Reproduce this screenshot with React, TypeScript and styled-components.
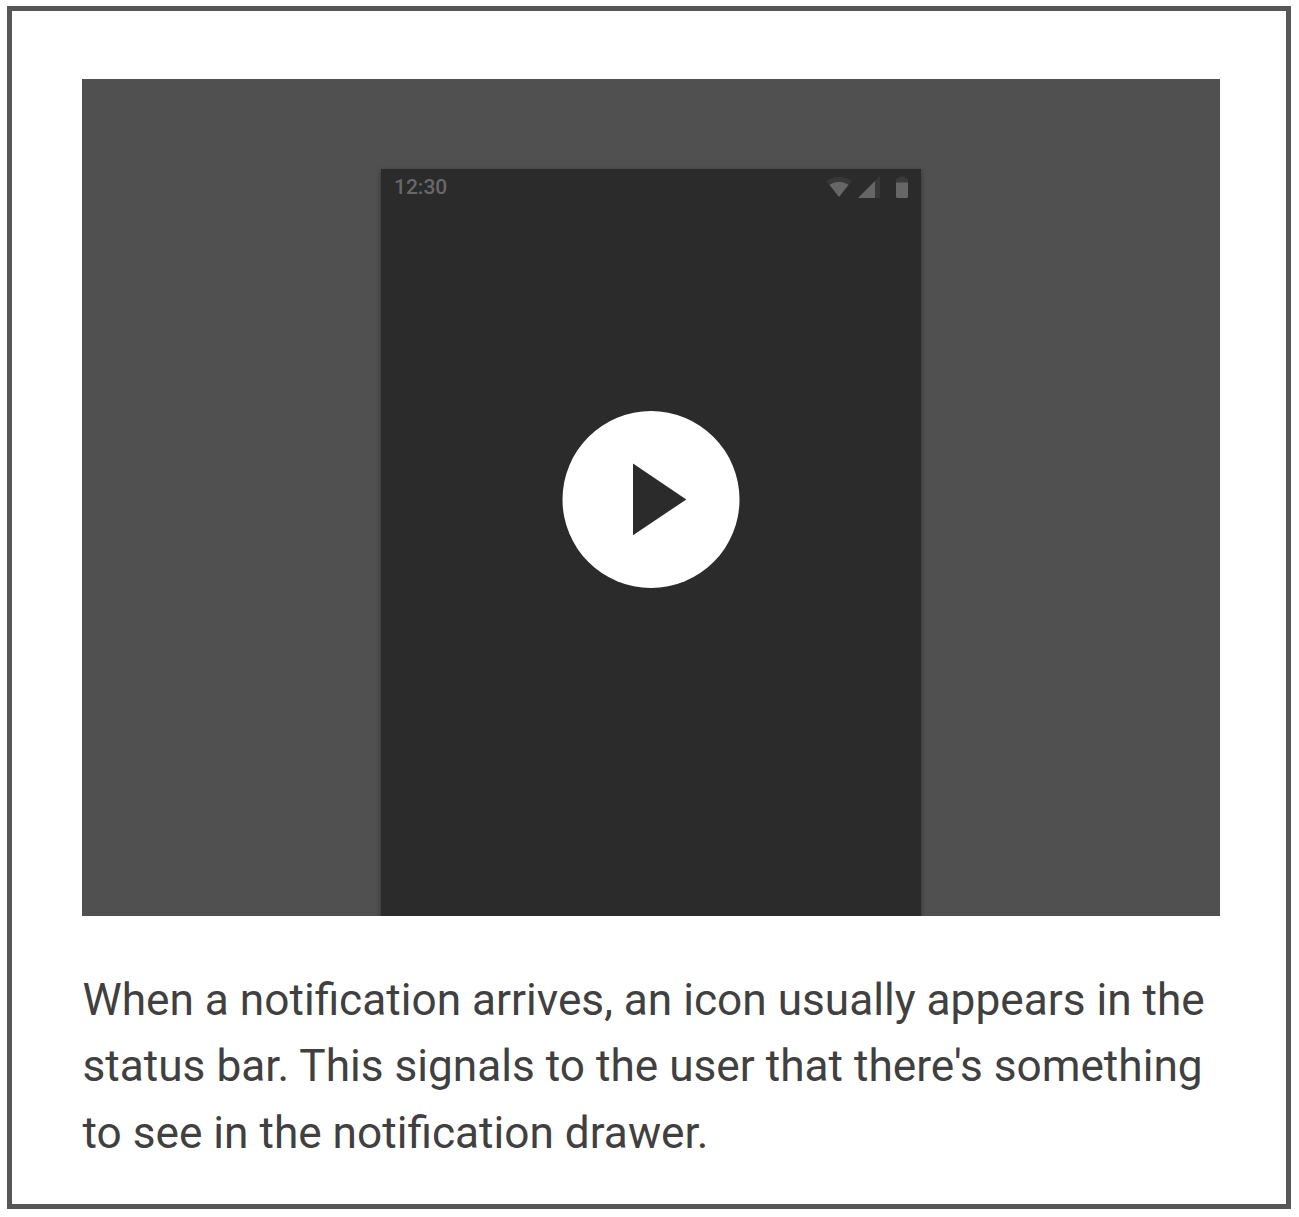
import React from "react";
import styled, { createGlobalStyle } from "styled-components";

const GlobalStyle = createGlobalStyle`
  *, *::before, *::after { box-sizing: border-box; }
  body { margin: 0; background: #fff; font-family: Roboto, "Liberation Sans", sans-serif; }
`;

const Page = styled.main`
  width: 1299px;
  height: 1217px;
  padding: 6px 8px 8px 7px;
`;

const Frame = styled.figure`
  height: 1203px;
  margin: 0;
  padding: 68px 66px 0 70px;
  border: 5px solid #575757;
`;

const Video = styled.div`
  position: relative;
  display: flex;
  justify-content: center;
  width: 1138px;
  height: 837px;
  padding-top: 90px;
  overflow: hidden;
  background: #505050;
`;

const Phone = styled.div`
  width: 540px;
  height: 760px;
  background: #2b2b2b;
  box-shadow: 0 2px 5px rgba(0, 0, 0, 0.4);
`;

const StatusBar = styled.div`
  display: flex;
  justify-content: space-between;
  align-items: flex-start;
  height: 36px;
  padding: 7px 12px 0 13px;
`;

const Clock = styled.span`
  margin-top: -1px;
  color: #686868;
  font-size: 21px;
  font-weight: 500;
  line-height: 24px;
`;

const StatusIcons = styled.svg`
  display: block;
  width: 84px;
  height: 24px;
`;

const PlayButton = styled.button`
  position: absolute;
  left: 480px;
  top: 331px;
  width: 178px;
  height: 178px;
  padding: 0;
  border: 0;
  background: transparent;
`;

const PlayIcon = styled.svg`
  display: block;
  width: 178px;
  height: 178px;
`;

const Caption = styled.figcaption`
  margin-top: 51px;
  padding-left: 0.5px;
  color: #404040;
  font-size: 44.2px;
  line-height: 66.4px;
`;

const Line = styled.span`
  display: block;
  white-space: nowrap;
`;

const lines = [
  "When a notification arrives, an icon usually appears in the",
  "status bar. This signals to the user that there's something",
  "to see in the notification drawer.",
];

export default function App() {
  return (
    <Page>
      <GlobalStyle />
      <Frame>
        <Video>
          <Phone>
            <StatusBar>
              <Clock>12:30</Clock>
              <StatusIcons viewBox="0 0 84 24" aria-hidden="true">
                <path d="M1 5Q14 -3 27 5L14 21Z" fill="#383838" />
                <path d="M4.500 8.8Q14 2.800 23.500 8.8L14 21Z" fill="#666" />
                <path d="M33 22L55 0V22Z" fill="#383838" />
                <path d="M33 22L50 5V22Z" fill="#666" />
                <path d="M71 7V2.500H74V0.500H80V2.500H83V7Z" fill="#3b3b3b" />
                <path d="M71 6.500H83V20.5Q83 22 81.500 22H72.500Q71 22 71 20.500Z" fill="#666" />
              </StatusIcons>
            </StatusBar>
          </Phone>
          <PlayButton aria-label="Play">
            <PlayIcon viewBox="0 0 178 178" aria-hidden="true">
              <circle cx="89" cy="89.5" r="88.5" fill="#fff" />
              <path d="M71 53.500V125.300L124.300 89.400Z" fill="#2b2b2b" />
            </PlayIcon>
          </PlayButton>
        </Video>
        <Caption>
          {lines.map((line) => (
            <Line key={line}>{line}</Line>
          ))}
        </Caption>
      </Frame>
    </Page>
  );
}
